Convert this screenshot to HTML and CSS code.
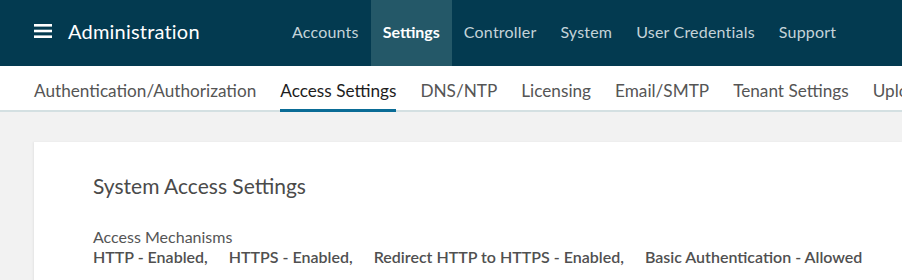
FILE: index.html
```html
<!DOCTYPE html>
<html lang="en">
<head>
    <meta charset="UTF-8">
    <title>Administration - Access Settings</title>
    <link rel="stylesheet" href="styles.css">
</head>
<body>
    <header class="topbar">
        <div class="brand">
            <svg class="hamburger" width="18" height="14" viewBox="0 0 18 14">
                <rect x="0" y="0" width="18" height="2.6" fill="#fff"/>
                <rect x="0" y="5.7" width="18" height="2.6" fill="#fff"/>
                <rect x="0" y="11.4" width="18" height="2.6" fill="#fff"/>
            </svg>
            <span class="brand-title">Administration</span>
        </div>
        <nav class="main-nav">
            <a href="#">Accounts</a>
            <a href="#" class="active">Settings</a>
            <a href="#">Controller</a>
            <a href="#">System</a>
            <a href="#">User Credentials</a>
            <a href="#">Support</a>
        </nav>
    </header>

    <nav class="sub-nav">
        <a href="#">Authentication/Authorization</a>
        <a href="#" class="active">Access Settings</a>
        <a href="#">DNS/NTP</a>
        <a href="#">Licensing</a>
        <a href="#">Email/SMTP</a>
        <a href="#">Tenant Settings</a>
        <a href="#">Upload</a>
    </nav>

    <main class="content">
        <section class="card">
            <h2>System Access Settings</h2>
            <div class="field">
                <div class="field-label">Access Mechanisms</div>
                <div class="field-values">
                    <span>HTTP - Enabled,</span>
                    <span>HTTPS - Enabled,</span>
                    <span>Redirect HTTP to HTTPS - Enabled,</span>
                    <span>Basic Authentication - Allowed</span>
                </div>
            </div>
        </section>
    </main>
</body>
</html>
```

FILE: styles.css
```css
body {
    margin: 0;
    font-family: Lato, "Noto Sans", sans-serif;
    background-color: #f2f2f2;
    overflow: hidden;
}
a {
    text-decoration: none;
}
.topbar {
    display: flex;
    align-items: stretch;
    height: 66px;
    background-color: #033a50;
}
.brand {
    display: flex;
    align-items: center;
    padding: 0 0 4px 34px;
    width: 246px;
}
.hamburger {
    margin-right: 16px;
}
.brand-title {
    color: #fff;
    font-size: 20px;
    letter-spacing: 0.2px;
}
.main-nav {
    display: flex;
}
.main-nav a {
    display: flex;
    align-items: center;
    padding: 0 12px 4px;
    color: #c3d3d9;
    font-size: 16px;
    letter-spacing: 0.2px;
}
.main-nav a.active {
    background-color: #245868;
    color: #fff;
    font-weight: bold;
    letter-spacing: 0;
}
.sub-nav {
    display: flex;
    gap: 24px;
    height: 44px;
    padding-left: 34px;
    background: #fff;
    border-bottom: 2px solid #d4e0e2;
    white-space: nowrap;
}
.sub-nav a {
    display: flex;
    align-items: center;
    height: 47px;
    margin-top: -1px;
    padding-top: 6px;
    box-sizing: border-box;
    color: #555;
    font-size: 17.2px;
    border-bottom: 3px solid transparent;
}
.sub-nav a.active {
    color: #1d1d1d;
    border-bottom-color: #0a6c96;
}
.content {
    padding: 30px 0 0 34px;
}
.card {
    background: #fff;
    padding: 30px 59px 40px;
    box-shadow: -1px 0 2px rgba(0, 0, 0, 0.06);
}
.card h2 {
    margin: 0 0 27px;
    font-size: 21px;
    line-height: 28px;
    font-weight: normal;
    color: #4a4a4a;
}
.field-label {
    font-size: 16px;
    line-height: 20px;
    color: #555;
}
.field-values {
    display: flex;
    gap: 21px;
    font-size: 16px;
    line-height: 20px;
    font-weight: 600;
    color: #505050;
    white-space: nowrap;
}
.field-values span {
    flex-shrink: 0;
}
```
